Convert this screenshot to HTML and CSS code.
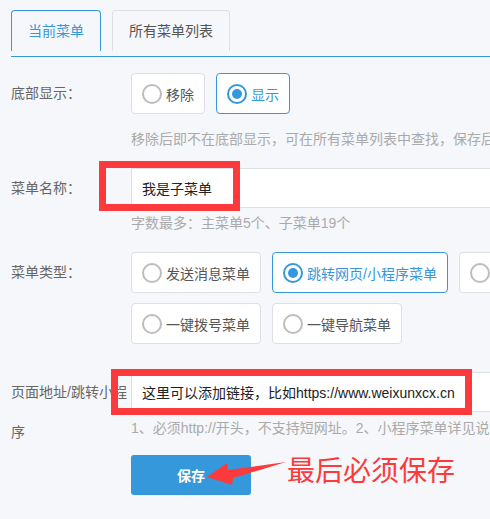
FILE: index.html
```html
<!DOCTYPE html>
<html lang="zh-CN">
<head>
    <meta charset="UTF-8">
    <meta name="viewport" content="width=device-width, initial-scale=1.0">
    <title>菜单设置</title>
    <link rel="stylesheet" href="styles.css">
</head>
<body>
    <div class="page">
        <!-- TABS -->
        <div class="tabs">
            <div class="tab active">当前菜单</div>
            <div class="tab">所有菜单列表</div>
        </div>

        <!-- 底部显示 -->
        <div class="row row-show">
            <div class="row-label">底部显示：</div>
            <div class="row-body">
                <div class="options">
                    <label class="option"><span class="radio"></span>移除</label>
                    <label class="option checked"><span class="radio"></span>显示</label>
                </div>
                <div class="hint hint-show">移除后即不在底部显示，可在所有菜单列表中查找，保存后重新显示</div>
            </div>
        </div>

        <!-- 菜单名称 -->
        <div class="row row-name">
            <div class="row-label">菜单名称：</div>
            <div class="row-body">
                <div class="field">
                    <input type="text" class="text-input" value="我是子菜单">
                    <span class="mark mark-name"></span>
                </div>
                <div class="hint">字数最多：主菜单5个、子菜单19个</div>
            </div>
        </div>

        <!-- 菜单类型 -->
        <div class="row row-type">
            <div class="row-label">菜单类型：</div>
            <div class="row-body">
                <div class="options wrap">
                    <label class="option"><span class="radio"></span>发送消息菜单</label>
                    <label class="option checked"><span class="radio"></span>跳转网页/小程序菜单</label>
                    <label class="option"><span class="radio"></span>扫码推送菜单</label>
                    <label class="option"><span class="radio"></span>一键拨号菜单</label>
                    <label class="option"><span class="radio"></span>一键导航菜单</label>
                </div>
            </div>
        </div>

        <!-- 页面地址 -->
        <div class="row row-url">
            <div class="row-label tall">页面地址/跳转小程序</div>
            <div class="row-body">
                <div class="field">
                    <input type="text" class="text-input" value="这里可以添加链接，比如https://www.weixunxcx.cn">
                    <span class="mark mark-url"></span>
                </div>
                <div class="hint hint-url">1、必须http://开头，不支持短网址。2、小程序菜单详见说明</div>
                <div class="save-area">
                    <button type="button" class="save-btn">保存</button>
                    <svg class="arrow" width="90" height="35" viewBox="0 0 90 35">
                        <polygon points="7,22 27,8 28,15 86,7 33,23 32,30" fill="#fc3a3c"/>
                    </svg>
                    <span class="note">最后必须保存</span>
                </div>
            </div>
        </div>
    </div>
</body>
</html>
```

FILE: styles.css
```css
body {
    margin: 0;
    background-color: #f5f7fa;
    font-family: 'Liberation Sans', 'Noto Sans CJK SC', sans-serif;
    font-size: 14px;
    color: #666;
    overflow: hidden;
}
.page {
    width: 760px;
    padding: 10px 0 0 11px;
}
.tabs {
    display: flex;
    gap: 11px;
    padding-bottom: 5px;
    border-bottom: 1px solid #3498db;
}
.tab {
    height: 40px;
    line-height: 40px;
    padding: 0 16px;
    border: 1px solid #dcdfe3;
    border-bottom: none;
    border-radius: 4px 4px 0 0;
    color: #555;
}
.tab.active {
    border-color: #3498db;
    color: #3498db;
}
.row {
    display: flex;
}
.row-label {
    width: 120px;
    flex-shrink: 0;
    line-height: 41px;
    color: #666;
}
.row-label.tall {
    line-height: 40px;
}
.row-body {
    flex: 1;
}
.row-show {
    margin-top: 16px;
}
.row-name {
    margin-top: 19px;
}
.row-type {
    margin-top: 19px;
}
.row-url {
    margin-top: 28px;
}
.options {
    display: flex;
    gap: 11px;
}
.options.wrap {
    width: 520px;
    flex-wrap: wrap;
    row-gap: 10px;
}
.option {
    display: flex;
    align-items: center;
    height: 41px;
    box-sizing: border-box;
    padding: 0 10px;
    background: #fff;
    border: 1px solid #dcdfe3;
    border-radius: 4px;
    color: #555;
}
.option.checked {
    border-color: #3498db;
    color: #3498db;
}
.radio {
    width: 20px;
    height: 20px;
    box-sizing: border-box;
    border: 2px solid #bdbdbd;
    border-radius: 50%;
    margin-right: 4px;
    position: relative;
}
.option.checked .radio {
    border-color: #3498db;
}
.option.checked .radio::after {
    content: "";
    position: absolute;
    left: 3px;
    top: 3px;
    width: 10px;
    height: 10px;
    border-radius: 50%;
    background: #3498db;
}
.hint {
    margin-top: 5px;
    line-height: 20px;
    color: #aaa;
    white-space: nowrap;
}
.hint-show {
    margin-top: 15px;
}
.hint-url {
    margin-top: 6px;
}
.field {
    position: relative;
}
.text-input {
    display: block;
    width: 420px;
    height: 40px;
    box-sizing: border-box;
    padding: 0 10px;
    border: 1px solid #dcdfe3;
    background: #fff;
    font-family: inherit;
    font-size: 14px;
    color: #222;
    outline: none;
}
.mark {
    position: absolute;
    border: 7px solid #fc3a3c;
    box-sizing: border-box;
}
.mark-name {
    left: -32px;
    top: -7px;
    width: 141px;
    height: 50px;
}
.mark-url {
    left: -20px;
    top: -3px;
    width: 361px;
    height: 46px;
}
.save-area {
    position: relative;
    margin-top: 17px;
}
.save-btn {
    width: 120px;
    height: 40px;
    border: none;
    border-radius: 3px;
    background-color: #3498db;
    color: #fff;
    font-family: inherit;
    font-size: 14px;
    font-weight: bold;
}
.arrow {
    position: absolute;
    left: 69px;
    top: 0;
}
.note {
    position: absolute;
    left: 156px;
    top: 0;
    font-size: 28px;
    line-height: 34px;
    color: #fc3a3c;
    white-space: nowrap;
}
```
